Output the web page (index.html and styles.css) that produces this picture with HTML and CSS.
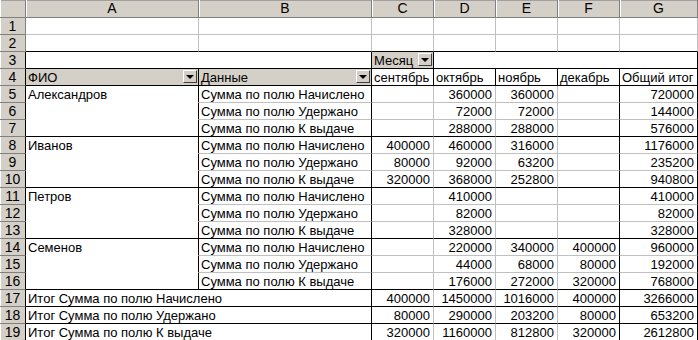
FILE: index.html
```html
<!DOCTYPE html>
<html lang="ru">
<head>
<meta charset="utf-8">
<title>Сводная таблица</title>
<link rel="stylesheet" href="styles.css">
</head>
<body>
<div class="sheet">
  <div class="ch corner"></div>
  <div class="ch">A</div><div class="ch">B</div><div class="ch">C</div><div class="ch">D</div><div class="ch">E</div><div class="ch">F</div><div class="ch">G</div>

  <div class="rh">1</div>
  <div class="c"></div><div class="c"></div><div class="c"></div><div class="c"></div><div class="c"></div><div class="c"></div><div class="c"></div>

  <div class="rh">2</div>
  <div class="c bb"></div><div class="c bb"></div><div class="c bb"></div><div class="c bb"></div><div class="c bb"></div><div class="c bb"></div><div class="c bb"></div>

  <div class="rh pv">3</div>
  <div class="c bb rb span2"></div>
  <div class="c fld bb rb"><span class="lbl">Месяц</span><span class="dd"><span class="tri"></span></span></div>
  <div class="c bb rb span4"></div>

  <div class="rh pv">4</div>
  <div class="c fld bb rb"><span class="lbl">ФИО</span><span class="dd"><span class="tri"></span></span></div>
  <div class="c fld bb rb"><span class="lbl">Данные</span><span class="dd"><span class="tri"></span></span></div>
  <div class="c bb rb">сентябрь</div><div class="c bb rb">октябрь</div><div class="c bb rb">ноябрь</div><div class="c bb rb">декабрь</div><div class="c bb rb">Общий итог</div>

  <div class="rh pv">5</div>
  <div class="c rb bn">Александров</div><div class="c rb">Сумма по полю Начислено</div>
  <div class="c n"></div><div class="c n">360000</div><div class="c n">360000</div><div class="c n rb"></div><div class="c n rb">720000</div>
  <div class="rh pv">6</div>
  <div class="c rb bn"></div><div class="c rb">Сумма по полю Удержано</div>
  <div class="c n"></div><div class="c n">72000</div><div class="c n">72000</div><div class="c n rb"></div><div class="c n rb">144000</div>
  <div class="rh pv">7</div>
  <div class="c rb bb"></div><div class="c rb bb">Сумма по полю К выдаче</div>
  <div class="c n bb"></div><div class="c n bb">288000</div><div class="c n bb">288000</div><div class="c n bb rb"></div><div class="c n bb rb">576000</div>

  <div class="rh pv">8</div>
  <div class="c rb bn">Иванов</div><div class="c rb">Сумма по полю Начислено</div>
  <div class="c n">400000</div><div class="c n">460000</div><div class="c n">316000</div><div class="c n rb"></div><div class="c n rb">1176000</div>
  <div class="rh pv">9</div>
  <div class="c rb bn"></div><div class="c rb">Сумма по полю Удержано</div>
  <div class="c n">80000</div><div class="c n">92000</div><div class="c n">63200</div><div class="c n rb"></div><div class="c n rb">235200</div>
  <div class="rh pv">10</div>
  <div class="c rb bb"></div><div class="c rb bb">Сумма по полю К выдаче</div>
  <div class="c n bb">320000</div><div class="c n bb">368000</div><div class="c n bb">252800</div><div class="c n bb rb"></div><div class="c n bb rb">940800</div>

  <div class="rh pv">11</div>
  <div class="c rb bn">Петров</div><div class="c rb">Сумма по полю Начислено</div>
  <div class="c n"></div><div class="c n">410000</div><div class="c n"></div><div class="c n rb"></div><div class="c n rb">410000</div>
  <div class="rh pv">12</div>
  <div class="c rb bn"></div><div class="c rb">Сумма по полю Удержано</div>
  <div class="c n"></div><div class="c n">82000</div><div class="c n"></div><div class="c n rb"></div><div class="c n rb">82000</div>
  <div class="rh pv">13</div>
  <div class="c rb bb"></div><div class="c rb bb">Сумма по полю К выдаче</div>
  <div class="c n bb"></div><div class="c n bb">328000</div><div class="c n bb"></div><div class="c n bb rb"></div><div class="c n bb rb">328000</div>

  <div class="rh pv">14</div>
  <div class="c rb bn">Семенов</div><div class="c rb">Сумма по полю Начислено</div>
  <div class="c n"></div><div class="c n">220000</div><div class="c n">340000</div><div class="c n rb">400000</div><div class="c n rb">960000</div>
  <div class="rh pv">15</div>
  <div class="c rb bn"></div><div class="c rb">Сумма по полю Удержано</div>
  <div class="c n"></div><div class="c n">44000</div><div class="c n">68000</div><div class="c n rb">80000</div><div class="c n rb">192000</div>
  <div class="rh pv">16</div>
  <div class="c rb bb"></div><div class="c rb bb">Сумма по полю К выдаче</div>
  <div class="c n bb"></div><div class="c n bb">176000</div><div class="c n bb">272000</div><div class="c n bb rb">320000</div><div class="c n bb rb">768000</div>

  <div class="rh pv">17</div>
  <div class="c bb rb span2">Итог Сумма по полю Начислено</div>
  <div class="c n bb">400000</div><div class="c n bb">1450000</div><div class="c n bb">1016000</div><div class="c n bb rb">400000</div><div class="c n bb rb">3266000</div>
  <div class="rh pv">18</div>
  <div class="c bb rb span2">Итог Сумма по полю Удержано</div>
  <div class="c n bb">80000</div><div class="c n bb">290000</div><div class="c n bb">203200</div><div class="c n bb rb">80000</div><div class="c n bb rb">653200</div>
  <div class="rh pv">19</div>
  <div class="c bb rb span2">Итог Сумма по полю К выдаче</div>
  <div class="c n bb">320000</div><div class="c n bb">1160000</div><div class="c n bb">812800</div><div class="c n bb rb">320000</div><div class="c n bb rb">2612800</div>
</div>
</body>
</html>
```
FILE: styles.css
```css
html, body {
  margin: 0;
  padding: 0;
  background: #fff;
}
body {
  width: 698px;
  height: 340px;
  overflow: hidden;
  font-family: "Liberation Sans", Arial, sans-serif;
  font-size: 13px;
  color: #000;
}
.sheet {
  display: grid;
  grid-template-columns: 26px 173px 173px 62px 62px 62px 62px 78px;
  grid-template-rows: 18px repeat(19, 17px);
}
.ch, .rh, .c {
  box-sizing: border-box;
  overflow: hidden;
  white-space: nowrap;
}
.ch {
  background: #d4d0c8;
  border-right: 1px solid #808080;
  border-bottom: 1px solid #808080;
  box-shadow: inset 1px 0 0 #fff, inset 0 1px 0 #a0a0a0;
  text-align: center;
  font-size: 14px;
  line-height: 15px;
  padding-top: 1px;
}
.rh {
  background: #d4d0c8;
  border-right: 1px solid #808080;
  border-bottom: 1px solid #808080;
  box-shadow: inset 1px 0 0 #fff;
  text-align: center;
  font-size: 14px;
  line-height: 15px;
  padding-top: 1px;
}
.rh.pv {
  border-right-color: #000;
}
.c {
  border-right: 1px solid #c0c0c0;
  border-bottom: 1px solid #c0c0c0;
  line-height: 14px;
  padding: 2px 2px 0 2px;
}
.n {
  text-align: right;
  padding-right: 3px;
}
.rb { border-right-color: #000; }
.bb { border-bottom-color: #000; }
.bn { border-bottom-color: transparent; }
.span2 { grid-column: span 2; }
.span4 { grid-column: span 4; }
.fld {
  background: #d4d0c8;
  display: flex;
  align-items: flex-start;
  padding: 1px 1px 0 2px;
}
.lbl {
  flex: 1;
  line-height: 14px;
  padding-top: 1px;
}
.dd {
  width: 14px;
  height: 13px;
  box-sizing: border-box;
  background: #d4d0c8;
  border-top: 1px solid #fff;
  border-left: 1px solid #fff;
  border-right: 1px solid #404040;
  border-bottom: 1px solid #404040;
  display: flex;
  align-items: center;
  justify-content: center;
}
.tri {
  width: 0;
  height: 0;
  border-left: 4px solid transparent;
  border-right: 4px solid transparent;
  border-top: 4px solid #000;
}
```
